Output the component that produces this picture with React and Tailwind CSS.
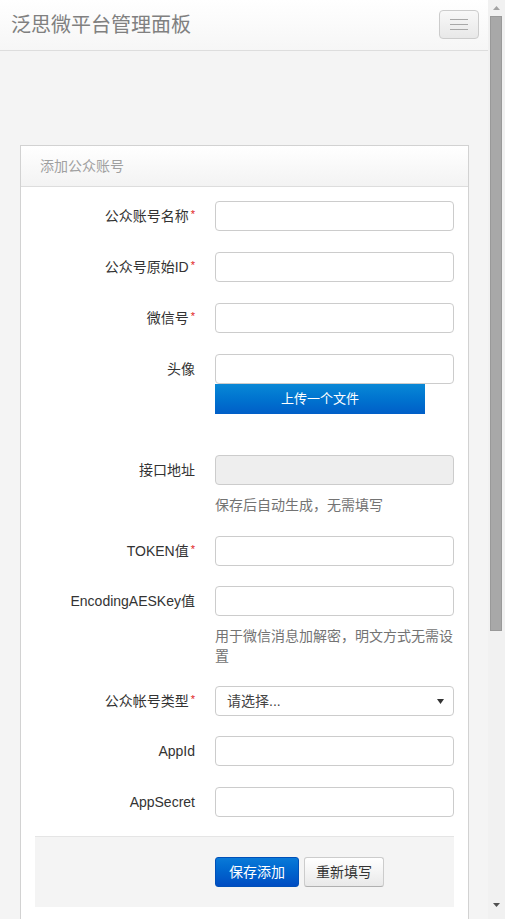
import React from "react";

const FONT = { fontFamily: '"Liberation Sans", "Noto Sans CJK SC", sans-serif' };

function Req() {
  return <span className="ml-[2px] text-[11px] leading-none text-[#e02222] relative top-[-2px]">*</span>;
}

function Label({ children, req }) {
  return (
    <div className="w-[160px] h-[30px] flex items-center justify-end text-[14px] text-[#333] whitespace-nowrap">
      <span>{children}</span>
      {req ? <Req /> : null}
    </div>
  );
}

function Input({ disabled }) {
  return (
    <div
      className={
        "w-[239px] h-[30px] rounded-[4px] border border-[#cccccc] " +
        (disabled ? "bg-[#eeeeee]" : "bg-white")
      }
    />
  );
}

function Help({ children }) {
  return <div className="mt-[10px] text-[14px] leading-[20px] text-[#737373]">{children}</div>;
}

function Row({ label, req, children, mb = "mb-[21px]" }) {
  return (
    <div className={"flex items-start gap-[20px] " + mb}>
      <Label req={req}>{label}</Label>
      <div className="w-[239px]">{children}</div>
    </div>
  );
}

export default function App() {
  return (
    <div style={FONT} className="w-[505px] h-[919px] overflow-hidden flex bg-[#f4f4f4]">
      <div className="w-[488px] flex flex-col">
        {/* navbar */}
        <div className="h-[51px] shrink-0 border-b border-[#dddddd] bg-gradient-to-b from-white to-[#f6f6f6] flex items-center justify-between pl-[11px] pr-[9px]">
          <div className="text-[20px] leading-[24px] text-[#808080] tracking-[0px]">泛思微平台管理面板</div>
          <div className="w-[40px] h-[29px] mt-[-2px] rounded-[4px] border border-[#cccccc] bg-gradient-to-b from-[#f8f8f8] to-[#e8e8e8] flex flex-col items-center justify-center gap-[4px]">
            <div className="w-[18px] h-[1px] bg-[#a8a8a8]" />
            <div className="w-[18px] h-[1px] bg-[#a8a8a8]" />
            <div className="w-[18px] h-[1px] bg-[#a8a8a8]" />
          </div>
        </div>

        {/* panel */}
        <div className="mt-[94px] ml-[20px] w-[449px] border border-[#d2d2d2] bg-white flex-1">
          <div className="h-[41px] border-b border-[#dddddd] bg-gradient-to-b from-white to-[#f3f3f3] flex items-center pl-[19px] text-[14px] text-[#a0a0a0]">
            添加公众账号
          </div>
          <div className="pt-[14px] pl-[14px] pr-[14px]">
            <Row label="公众账号名称" req>
              <Input />
            </Row>
            <Row label="公众号原始ID" req>
              <Input />
            </Row>
            <Row label="微信号" req>
              <Input />
            </Row>
            <Row label="头像">
              <Input />
              <div className="w-[210px] h-[30px] bg-gradient-to-b from-[#0a88d6] to-[#005ec8] flex items-center justify-center text-[13px] text-white">
                上传一个文件
              </div>
              <div className="h-[20px]" />
            </Row>
            <Row label="接口地址">
              <Input disabled />
              <Help>保存后自动生成，无需填写</Help>
            </Row>
            <Row label="TOKEN值" req mb="mb-[20px]">
              <Input />
            </Row>
            <Row label="EncodingAESKey值" mb="mb-[20px]">
              <Input />
              <Help>
                用于微信消息加解密，明文方式无需设
                <br />置
              </Help>
            </Row>
            <Row label="公众帐号类型" req mb="mb-[20px]">
              <div className="relative w-[239px] h-[30px] rounded-[4px] border border-[#cccccc] bg-white flex items-center pl-[11px] text-[14px] text-[#444]">
                请选择...
                <svg className="absolute right-[9px] top-[12px]" width="7" height="5" viewBox="0 0 7 5">
                  <path d="M0 0H7L3.5 5Z" fill="#333" />
                </svg>
              </div>
            </Row>
            <Row label="AppId">
              <Input />
            </Row>
            <Row label="AppSecret" mb="mb-[19px]">
              <Input />
            </Row>

            <div className="border-t border-[#e5e5e5] bg-[#f4f4f4] pt-[20px] pb-[20px] pl-[180px] flex gap-[5px]">
              <div className="h-[30px] px-[13px] rounded-[3px] border border-[#0050b8] bg-gradient-to-b from-[#0a7ad8] to-[#004cc2] flex items-center text-[14px] text-white">
                保存添加
              </div>
              <div className="h-[30px] px-[11px] rounded-[3px] border border-[#cccccc] border-b-[#b0b0b0] bg-gradient-to-b from-white to-[#e9e9e9] flex items-center text-[14px] text-[#333]">
                重新填写
              </div>
            </div>
            <div className="h-[40px]" />
          </div>
        </div>
      </div>

      {/* scrollbar */}
      <div className="w-[17px] h-[919px] bg-[#f1f1f1] flex flex-col items-center">
        <div className="h-[16px] flex items-center justify-center">
          <svg width="7" height="4" viewBox="0 0 7 4">
            <path d="M0 4H7L3.5 0Z" fill="#a3a3a3" />
          </svg>
        </div>
        <div className="w-[12px] h-[615px] ml-[-1px] bg-[#a8a8a8] border border-[#999999]" />
        <div className="flex-1" />
        <div className="h-[18px] flex items-start justify-center pt-[2px]">
          <svg width="7" height="4" viewBox="0 0 7 4">
            <path d="M0 0H7L3.5 4Z" fill="#505050" />
          </svg>
        </div>
      </div>
    </div>
  );
}
